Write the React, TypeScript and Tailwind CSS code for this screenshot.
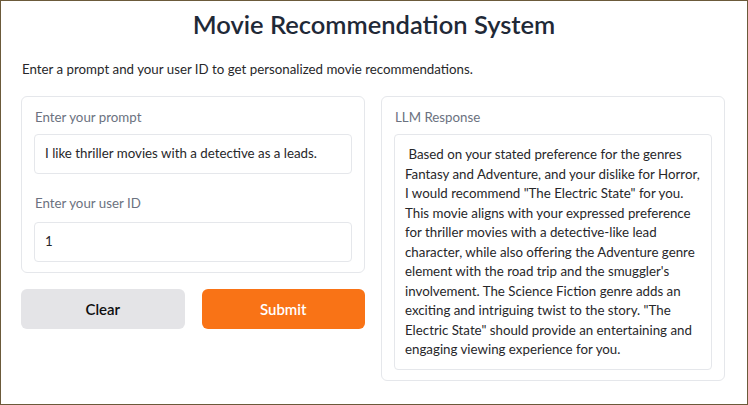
import React from "react";

const font = { fontFamily: "Lato, 'Noto Sans', sans-serif" };

const lines = [
  "\u00a0Based on your stated preference for the genres",
  "Fantasy and Adventure, and your dislike for Horror,",
  "I would recommend \"The Electric State\" for you.",
  "This movie aligns with your expressed preference",
  "for thriller movies with a detective-like lead",
  "character, while also offering the Adventure genre",
  "element with the road trip and the smuggler's",
  "involvement. The Science Fiction genre adds an",
  "exciting and intriguing twist to the story. \"The",
  "Electric State\" should provide an entertaining and",
  "engaging viewing experience for you.",
];

export default function App() {
  return (
    <div
      className="w-[748px] h-[405px] border border-[#6b5a3a] bg-white text-[#27272a] overflow-hidden"
      style={font}
    >
      <h1 className="text-center text-[25.5px] font-semibold text-[#1f2937] pt-[5px] leading-[36px]">
        Movie Recommendation System
      </h1>
      <p className="text-[13.3px] text-[#27272a] ml-[21px] mt-[17px] leading-[20px]">
        Enter a prompt and your user ID to get personalized movie recommendations.
      </p>
      <div className="flex gap-[16px] px-[20px] mt-[17px]">
        <div className="w-[344px] flex flex-col gap-[16px]">
          <div className="border border-[#e5e7eb] rounded-[6px] px-[12px] pt-[10px] pb-[10px]">
            <div className="text-[13.3px] text-[#6b7280] leading-[20px] ml-[1px]">Enter your prompt</div>
            <div className="mt-[7px] h-[40px] border border-[#e5e7eb] rounded-[4px] flex items-center px-[10px] text-[13.3px] text-[#27272a]">
              I like thriller movies with a detective as a leads.
            </div>
            <div className="text-[13.3px] text-[#6b7280] leading-[20px] mt-[19px] ml-[1px]">Enter your user ID</div>
            <div className="mt-[9px] h-[40px] border border-[#e5e7eb] rounded-[4px] flex items-center px-[10px] text-[13.3px] text-[#27272a]">
              1
            </div>
          </div>
          <div className="flex gap-[17px]">
            <button className="flex-1 h-[40px] rounded-[6px] bg-[#e4e4e7] text-[#0f0f0f] text-[15px] font-semibold">
              Clear
            </button>
            <button className="flex-1 h-[40px] rounded-[6px] bg-[#f97316] text-white text-[15px] font-semibold">
              Submit
            </button>
          </div>
        </div>
        <div className="w-[344px] border border-[#e5e7eb] rounded-[6px] px-[12px] pt-[10px] pb-[10px] h-[285px]">
          <div className="text-[13.3px] text-[#6b7280] leading-[20px] ml-[1px]">LLM Response</div>
          <div className="mt-[7px] h-[236px] border border-[#e5e7eb] rounded-[4px] px-[10px] pt-[10px] text-[13.3px] leading-[19.5px] text-[#27272a]">
            {lines.map((l, i) => (
              <div key={i} className="whitespace-nowrap">{l}</div>
            ))}
          </div>
        </div>
      </div>
    </div>
  );
}
